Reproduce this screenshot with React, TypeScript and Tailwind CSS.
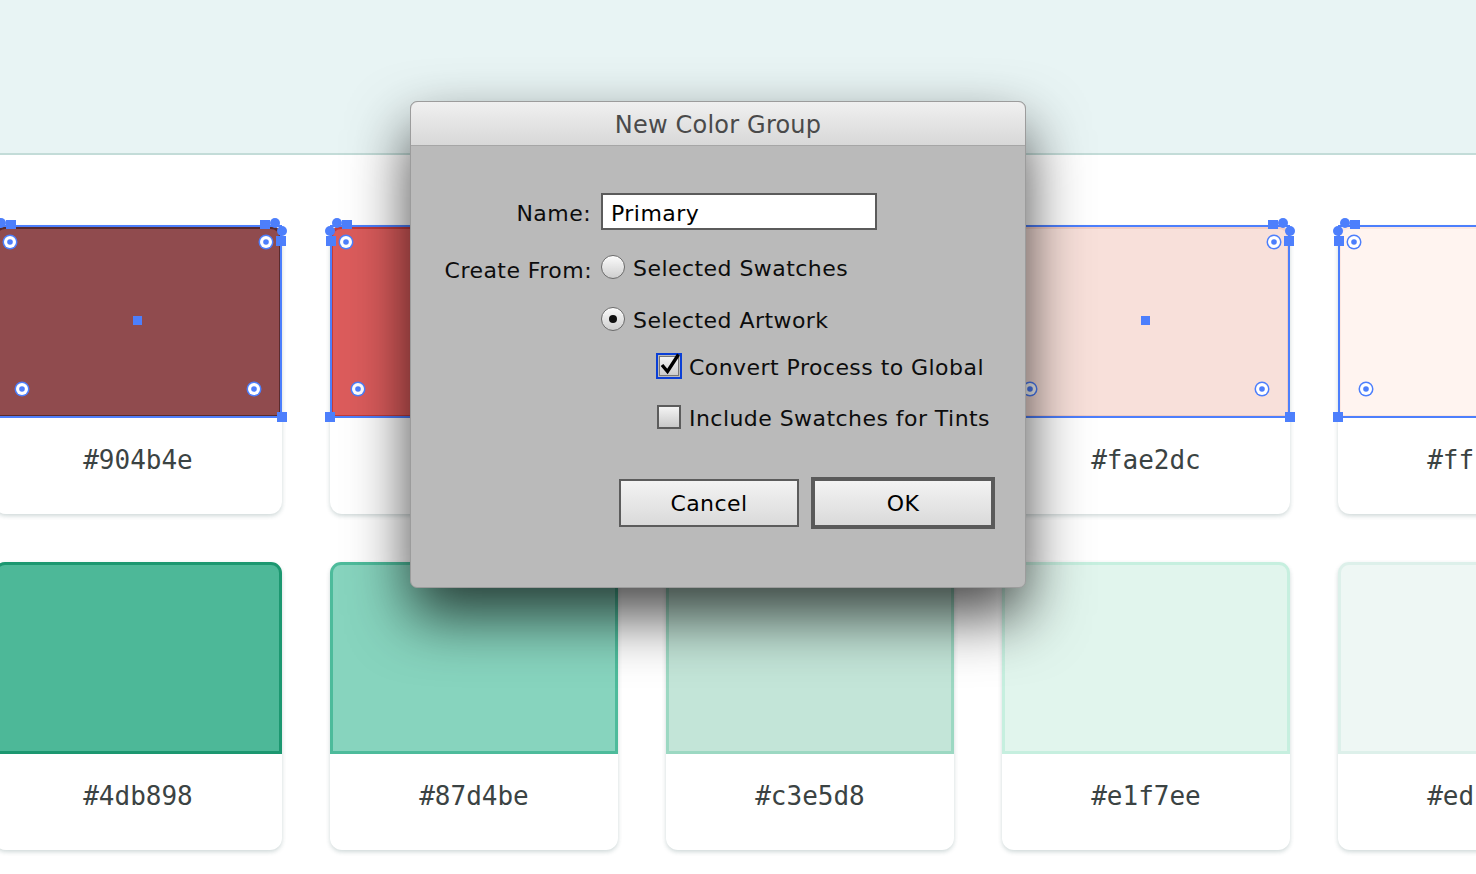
import React from 'react';

type Swatch = { hex: string; fill: string; border: string };

const rowOne: Swatch[] = [
  { hex: '#904b4e', fill: '#904b4e', border: '#5a2a2d' },
  { hex: '#e05d5d', fill: '#dc5c5c', border: '#c23b3c' },
  { hex: '#f4a59e', fill: '#f4a59e', border: '#ec8c84' },
  { hex: '#fae2dc', fill: '#f8e0da', border: '#f3cdc4' },
  { hex: '#fff4f0', fill: '#fff4f0', border: '#fde7e0' },
];

const rowTwo: Swatch[] = [
  { hex: '#4db898', fill: '#4db898', border: '#1c9770' },
  { hex: '#87d4be', fill: '#87d4be', border: '#4dbb9b' },
  { hex: '#c3e5d8', fill: '#c3e5d8', border: '#9cd8c2' },
  { hex: '#e1f7ee', fill: '#e1f5ed', border: '#c6efdf' },
  { hex: '#edf7f4', fill: '#eef7f4', border: '#ddf0ea' },
];

const BLUE = '#4d7ffc';

function Widget({ x, y }: { x: number; y: number }) {
  return (
    <g>
      <circle cx={x} cy={y} r={7.5} fill={BLUE} />
      <circle cx={x} cy={y} r={6} fill="#fff" />
      <circle cx={x} cy={y} r={2.8} fill={BLUE} />
    </g>
  );
}

// Illustrator-style selection marks drawn over a swatch
function Selection() {
  return (
    <svg
      className="absolute left-0 top-0 pointer-events-none overflow-visible"
      width={288}
      height={192}
      viewBox="0 0 288 192"
    >
      <rect x={1} y={0} width={286} height={191} fill="none" stroke={BLUE} strokeWidth={2} />
      {/* top-right cluster */}
      <rect x={266} y={-6} width={10} height={9} fill={BLUE} />
      <circle cx={281} cy={-3} r={5} fill={BLUE} />
      <circle cx={288} cy={5} r={5} fill={BLUE} />
      <rect x={282} y={10} width={10} height={10} fill={BLUE} />
      {/* top-left cluster */}
      <rect x={12} y={-6} width={10} height={9} fill={BLUE} />
      <circle cx={7} cy={-3} r={5} fill={BLUE} />
      <circle cx={0} cy={5} r={5} fill={BLUE} />
      <rect x={-4} y={10} width={10} height={10} fill={BLUE} />
      {/* bottom corners */}
      <rect x={-5} y={186} width={10} height={10} fill={BLUE} />
      <rect x={283} y={186} width={10} height={10} fill={BLUE} />
      {/* center */}
      <rect x={139} y={90} width={9} height={9} fill={BLUE} />
      <Widget x={16} y={16} />
      <Widget x={272} y={16} />
      <Widget x={28} y={163} />
      <Widget x={260} y={163} />
    </svg>
  );
}

function Card({ s, selected }: { s: Swatch; selected?: boolean }) {
  return (
    <div className="relative w-[288px] h-[288px] shrink-0 rounded-[12px] bg-white shadow-[0_2px_4px_rgba(40,80,80,0.22)]">
      <div
        className="h-[192px] rounded-t-[11px] border-[3px]"
        style={{ backgroundColor: s.fill, borderColor: s.border }}
      />
      <div className="h-[96px] flex items-center justify-center pb-[12px] font-['DejaVu_Sans_Mono',monospace] text-[26px] text-[#3b4343]">
        {s.hex}
      </div>
      {selected && <Selection />}
    </div>
  );
}

function Radio({ checked }: { checked?: boolean }) {
  return (
    <span className="w-[24px] h-[24px] shrink-0 rounded-full border border-[#6b6b6b] bg-gradient-to-b from-[#fbfbfb] to-[#cfcfcf] flex items-center justify-center shadow-[inset_0_1px_1px_rgba(255,255,255,0.8)]">
      {checked && <span className="w-[8px] h-[8px] rounded-full bg-[#111]" />}
    </span>
  );
}

function Dialog() {
  return (
    <div className="absolute left-[410px] top-[101px] z-10 w-[616px] h-[487px] rounded-[7px] border border-[#9c9c9c] bg-[#bababa] shadow-[0_28px_60px_rgba(0,0,0,0.72)] font-['DejaVu_Sans',sans-serif] text-[22px] tracking-[0.45px] text-[#0d0d0d]">
      <div className="h-[44px] rounded-t-[7px] bg-gradient-to-b from-[#f0f0f0] to-[#d8d8d8] border-b border-[#a6a6a6] flex items-center justify-center pt-[3px] text-[24px] tracking-[0.2px] text-[#4a4a4a]">
        New Color Group
      </div>
      <div className="flex flex-col">
        <div className="mt-[47px] h-[37px] flex items-center">
          <span className="w-[180px] text-right pt-[4px]">Name:</span>
          <div className="ml-[10px] w-[276px] h-[37px] border-2 border-[#5b5b5b] bg-white flex items-center pl-[8px] pt-[4px] text-black">
            Primary
          </div>
        </div>
        <div className="mt-[22px] h-[30px] flex items-center">
          <span className="w-[181px] text-right pt-[6px]">Create From:</span>
          <span className="ml-[9px]"><Radio /></span>
          <span className="ml-[8px] pt-[2px]">Selected Swatches</span>
        </div>
        <div className="mt-[22px] h-[30px] flex items-center pl-[190px]">
          <Radio checked />
          <span className="ml-[8px] pt-[2px]">Selected Artwork</span>
        </div>
        <div className="mt-[17px] h-[30px] flex items-center pl-[245px]">
          <span className="w-[26px] h-[26px] shrink-0 border-2 border-[#0b3fd6] p-[1px]">
            <span className="block w-full h-full border border-[#777] bg-gradient-to-b from-[#f4f4f4] to-[#cdcdcd] relative">
              <svg className="absolute -left-[1px] -top-[5px]" width={22} height={23} viewBox="0 0 22 23">
                <path d="M3 13 L8.5 19.5 L19.5 2.5" fill="none" stroke="#000" strokeWidth={3.4} strokeLinejoin="miter" />
              </svg>
            </span>
          </span>
          <span className="ml-[7px] pt-[2px]">Convert Process to Global</span>
        </div>
        <div className="mt-[21px] h-[30px] flex items-center pl-[246px]">
          <span className="w-[24px] h-[24px] shrink-0 border-2 border-[#5c5c5c] bg-gradient-to-b from-[#f4f4f4] to-[#c9c9c9]" />
          <span className="ml-[8px] pt-[2px]">Include Swatches for Tints</span>
        </div>
        <div className="mt-[45px] h-[52px] flex items-center justify-end gap-[12px] pr-[30px]">
          <div className="w-[180px] h-[48px] border-2 border-[#5c5c5c] bg-gradient-to-b from-[#f3f3f3] to-[#dadada] flex items-center justify-center text-black">
            Cancel
          </div>
          <div className="w-[184px] h-[52px] border-4 border-[#5a5a5a] bg-gradient-to-b from-[#f3f3f3] to-[#dadada] flex items-center justify-center text-black">
            OK
          </div>
        </div>
      </div>
    </div>
  );
}

export default function App() {
  return (
    <div className="relative w-[1476px] h-[874px] overflow-hidden bg-white">
      <div className="h-[155px] bg-[#e8f4f4] border-b-2 border-[#c3dcd8]" />
      <div className="-ml-[6px] mt-[71px] flex flex-col gap-[48px]">
        <div className="flex gap-[48px]">
          {rowOne.map((s) => (
            <Card key={s.hex} s={s} selected />
          ))}
        </div>
        <div className="flex gap-[48px]">
          {rowTwo.map((s) => (
            <Card key={s.hex} s={s} />
          ))}
        </div>
      </div>
      <Dialog />
    </div>
  );
}
